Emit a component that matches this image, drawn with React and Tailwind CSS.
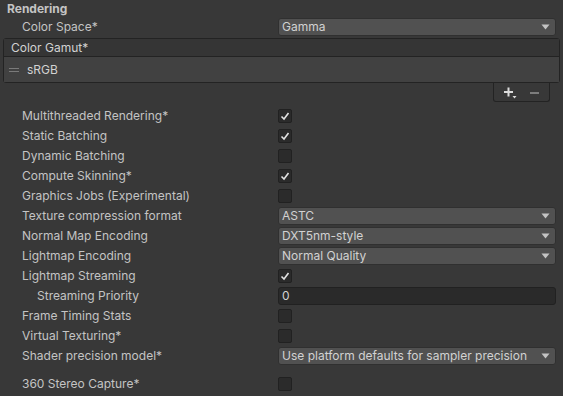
const font = { fontFamily: "Inter, 'Noto Sans', sans-serif" };

function Arrow() {
  return (
    <svg width="9" height="6" viewBox="0 0 9 6" className="shrink-0">
      <path d="M0.5 0.5 L8.5 0.5 L4.5 5.5 Z" fill="#c4c4c4" />
    </svg>
  );
}

function Dropdown({ value }) {
  return (
    <div className="flex h-[18px] w-[278px] items-center justify-between rounded-[3px] border border-[#303030] bg-[#515151] pl-[3px] pr-[5px] text-[#d2d2d2]">
      <span>{value}</span>
      <Arrow />
    </div>
  );
}

function Check({ on }) {
  return (
    <div className="flex h-[14px] w-[14px] items-center justify-center rounded-[2px] border border-[#212121] bg-[#2b2b2b]">
      {on && (
        <svg width="10" height="10" viewBox="0 0 10 10">
          <path d="M1.5 5.5 L4 8 L8.5 2" fill="none" stroke="#e4e4e4" strokeWidth="1.6" />
        </svg>
      )}
    </div>
  );
}

function Row({ label, indent, children }) {
  return (
    <div className="flex h-[20px] items-center">
      <div className={indent ? "w-[278px] pl-[37px]" : "w-[278px] pl-[22px]"}>{label}</div>
      {children}
    </div>
  );
}

export default function App() {
  return (
    <div className="h-[396px] w-[563px] overflow-hidden bg-[#383838] text-[12px] text-[#c4c4c4]" style={font}>
      <div className="flex h-[17px] items-center pl-[7px] pt-[1px] font-bold">Rendering</div>
      <Row label="Color Space*">
        <Dropdown value="Gamma" />
      </Row>

      <div className="mx-[3px] mt-[1px] rounded-[3px] border border-[#232323]">
        <div className="flex h-[18px] items-center border-b border-[#232323] bg-[#353535] pl-[7px] text-[#d2d2d2]">
          Color Gamut*
        </div>
        <div className="flex h-[25px] items-center bg-[#414141] pl-[5px] text-[#d2d2d2]">
          <div className="mr-[8px] flex w-[10px] flex-col gap-[2px]">
            <div className="h-[1px] bg-[#7a7a7a]" />
            <div className="h-[1px] bg-[#7a7a7a]" />
          </div>
          sRGB
        </div>
      </div>
      <div className="flex justify-end pr-[13px]">
        <div className="flex h-[19px] w-[57px] items-center justify-center gap-[13px] rounded-b-[3px] border border-t-0 border-[#232323] bg-[#383838] pt-[1px]">
          <svg width="13" height="12" viewBox="0 0 13 12">
            <path d="M4.5 0.5 V9.5 M0 5 H9" stroke="#dcdcdc" strokeWidth="2" />
            <path d="M8.5 9 H12.5 L10.5 11.5 Z" fill="#dcdcdc" />
          </svg>
          <div className="h-[2px] w-[9px] bg-[#7d7d7d]" />
        </div>
      </div>

      <div className="mt-[4px]">
        <Row label="Multithreaded Rendering*"><Check on /></Row>
        <Row label="Static Batching"><Check on /></Row>
        <Row label="Dynamic Batching"><Check /></Row>
        <Row label="Compute Skinning*"><Check on /></Row>
        <Row label="Graphics Jobs (Experimental)"><Check /></Row>
        <Row label="Texture compression format"><Dropdown value="ASTC" /></Row>
        <Row label="Normal Map Encoding"><Dropdown value="DXT5nm-style" /></Row>
        <Row label="Lightmap Encoding"><Dropdown value="Normal Quality" /></Row>
        <Row label="Lightmap Streaming"><Check on /></Row>
        <Row label="Streaming Priority" indent>
          <div className="flex h-[18px] w-[278px] items-center rounded-[3px] border border-[#212121] bg-[#2a2a2a] pl-[3px] text-[#d2d2d2]">
            0
          </div>
        </Row>
        <Row label="Frame Timing Stats"><Check /></Row>
        <Row label="Virtual Texturing*"><Check /></Row>
        <Row label="Shader precision model*">
          <Dropdown value="Use platform defaults for sampler precision" />
        </Row>
        <div className="mt-[8px]">
          <Row label="360 Stereo Capture*"><Check /></Row>
        </div>
      </div>
    </div>
  );
}
